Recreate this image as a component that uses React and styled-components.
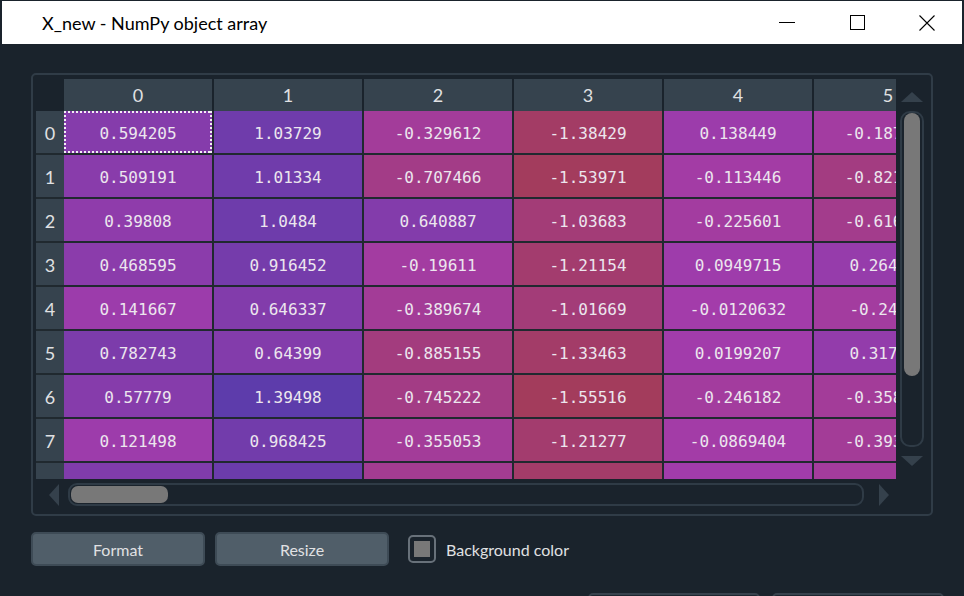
import React from 'react';
import styled, { createGlobalStyle } from 'styled-components';

const GlobalStyle = createGlobalStyle`
  html, body { margin: 0; padding: 0; background: #1a232c; }
  body { font-family: Lato, "Noto Sans", sans-serif; }
  * { box-sizing: border-box; }
`;

const BG = [26, 35, 44];
const GRID = '#20292f';
const HEADER = '#36434e';

const data = [
  ['0.594205', '1.03729', '-0.329612', '-1.38429', '0.138449', '-0.187421'],
  ['0.509191', '1.01334', '-0.707466', '-1.53971', '-0.113446', '-0.821937'],
  ['0.39808', '1.0484', '0.640887', '-1.03683', '-0.225601', '-0.616052'],
  ['0.468595', '0.916452', '-0.19611', '-1.21154', '0.0949715', '0.264318'],
  ['0.141667', '0.646337', '-0.389674', '-1.01669', '-0.0120632', '-0.24561'],
  ['0.782743', '0.64399', '-0.885155', '-1.33463', '0.0199207', '0.317426'],
  ['0.57779', '1.39498', '-0.745222', '-1.55516', '-0.246182', '-0.358214'],
  ['0.121498', '0.968425', '-0.355053', '-1.21277', '-0.0869404', '-0.393157'],
  ['0.702114', '1.10532', '-0.512207', '-1.30118', '0.0512734', '-0.301548'],
];

function cellColor(str) {
  const v = parseFloat(str);
  const vmax = 2.2;
  const vmin = -2.0;
  const hue = (0.66 + (0.33 * (vmax - v)) / (vmax - vmin)) * 360;
  const s = 0.7;
  const val = 1;
  const c = val * s;
  const x = c * (1 - Math.abs(((hue / 60) % 2) - 1));
  const m = val - c;
  let r = 0, g = 0, b = 0;
  if (hue < 60) [r, g, b] = [c, x, 0];
  else if (hue < 120) [r, g, b] = [x, c, 0];
  else if (hue < 180) [r, g, b] = [0, c, x];
  else if (hue < 240) [r, g, b] = [0, x, c];
  else if (hue < 300) [r, g, b] = [x, 0, c];
  else [r, g, b] = [c, 0, x];
  const a = 0.6;
  const mix = (ch, i) => Math.round(((ch + m) * 255) * a + BG[i] * (1 - a));
  return `rgb(${mix(r, 0)}, ${mix(g, 1)}, ${mix(b, 2)})`;
}

const Window = styled.div`
  width: 964px;
  height: 596px;
  overflow: hidden;
  background: #1a232c;
  display: flex;
  flex-direction: column;
`;

const TitleBar = styled.div`
  height: 43px;
  margin: 1px 2px 0 2px;
  background: #ffffff;
  display: flex;
  align-items: center;
  flex-shrink: 0;
`;

const Title = styled.div`
  flex: 1;
  padding-left: 40px;
  font-family: Lato, "Noto Sans", sans-serif;
  font-size: 18px;
  color: #000;
`;

const CaptionButton = styled.div`
  width: 70px;
  height: 100%;
  display: flex;
  align-items: center;
  justify-content: center;
`;

const Body = styled.div`
  padding: 29px 31px 0 31px;
  display: flex;
  flex-direction: column;
`;

const Frame = styled.div`
  width: 902px;
  height: 443px;
  border: 2px solid #303c47;
  border-radius: 5px;
  padding: 4px 3px 0 3px;
  display: grid;
  grid-template-columns: 860px 32px;
  grid-template-rows: 400px 35px;
`;

const Viewport = styled.div`
  width: 860px;
  height: 400px;
  overflow: hidden;
`;

const Row = styled.div`
  display: flex;
`;

const Corner = styled.div`
  width: 28px;
  height: 32px;
  flex-shrink: 0;
`;

const HeaderCell = styled.div`
  width: 150px;
  height: 32px;
  flex-shrink: 0;
  background: ${HEADER};
  border-right: 2px solid #1a232c;
  color: #e0e1e3;
  font-family: Lato, "Noto Sans", sans-serif;
  font-size: 18px;
  display: flex;
  align-items: center;
  justify-content: center;
`;

const RowHeader = styled.div`
  width: 28px;
  height: 44px;
  flex-shrink: 0;
  background: ${HEADER};
  border-bottom: 2px solid ${GRID};
  color: #e0e1e3;
  font-family: Lato, "Noto Sans", sans-serif;
  font-size: 18px;
  padding-top: 2px;
  display: flex;
  align-items: center;
  justify-content: center;
`;

const Cell = styled.div`
  position: relative;
  width: 150px;
  height: 44px;
  flex-shrink: 0;
  background: ${(p) => p.$bg};
  border-right: 2px solid ${GRID};
  border-bottom: 2px solid ${GRID};
  color: #ece6ee;
  font-family: "DejaVu Sans Mono", monospace;
  font-size: 16px;
  padding-top: 2px;
  display: flex;
  align-items: center;
  justify-content: center;
  white-space: nowrap;

  ${(p) =>
    p.$focused &&
    `
    &::after {
      content: '';
      position: absolute;
      left: 0; top: 0; right: 0; bottom: 0;
      background:
        repeating-linear-gradient(90deg, #f3eef4 0 2px, transparent 2px 4px) top left / 100% 2px no-repeat,
        repeating-linear-gradient(90deg, #f3eef4 0 2px, transparent 2px 4px) bottom left / 100% 2px no-repeat,
        repeating-linear-gradient(180deg, #f3eef4 0 2px, transparent 2px 4px) top left / 2px 100% no-repeat,
        repeating-linear-gradient(180deg, #f3eef4 0 2px, transparent 2px 4px) top right / 2px 100% no-repeat;
    }
  `}
`;

const VScroll = styled.div`
  display: flex;
  flex-direction: column;
`;

const ArrowArea = styled.div`
  height: ${(p) => p.$h || 32}px;
  width: ${(p) => p.$w || 32}px;
  padding-top: ${(p) => p.$pt || 0}px;
  padding-left: ${(p) => p.$pl || 0}px;
  flex-shrink: 0;
  display: flex;
  align-items: flex-start;
`;

const VTrack = styled.div`
  height: 336px;
  margin: 0 4px;
  border: 2px solid #2f3b46;
  border-radius: 10px;
  padding: 0 2px;
`;

const VHandle = styled.div`
  height: 263px;
  background: #787878;
  border-radius: 8px;
`;

const HScroll = styled.div`
  display: flex;
  padding-top: 4px;
`;

const HTrack = styled.div`
  width: 796px;
  height: 23px;
  border: 2px solid #2f3b46;
  border-radius: 9px;
  padding: 1px 1px;
`;

const HHandle = styled.div`
  width: 97px;
  height: 17px;
  background: #787878;
  border-radius: 7px;
`;

const Toolbar = styled.div`
  margin-top: 16px;
  height: 34px;
  display: flex;
  align-items: center;
  gap: 10px;
`;

const Button = styled.div`
  width: 174px;
  height: 34px;
  background: #505e69;
  border: 2px solid #3e4b56;
  border-radius: 5px;
  color: #e0e1e3;
  font-family: Lato, "Noto Sans", sans-serif;
  font-size: 16px;
  display: flex;
  align-items: center;
  justify-content: center;
`;

const CheckLabel = styled.label`
  margin-left: 9px;
  display: flex;
  align-items: center;
  gap: 10px;
  color: #e0e1e3;
  font-family: Lato, "Noto Sans", sans-serif;
  font-size: 16px;
`;

const CheckBox = styled.span`
  width: 28px;
  height: 28px;
  border: 2px solid #68717a;
  border-radius: 5px;
  padding: 4px;
  display: flex;
`;

const CheckFill = styled.span`
  flex: 1;
  background: #787878;
`;

const Footer = styled.div`
  margin-top: 27px;
  padding-right: 20px;
  display: flex;
  justify-content: flex-end;
  gap: 12px;
`;

const FooterButton = styled.div`
  width: 172px;
  height: 34px;
  border: 2px solid #37424d;
  border-radius: 5px;
  background: #1d2630;
`;

const Tri = ({ dir }) => {
  const fill = '#35414c';
  if (dir === 'up')
    return (
      <svg width="22" height="10" viewBox="0 0 22 10">
        <polygon points="0,10 11,0 22,10" fill={fill} />
      </svg>
    );
  if (dir === 'down')
    return (
      <svg width="22" height="10" viewBox="0 0 22 10">
        <polygon points="0,0 22,0 11,10" fill={fill} />
      </svg>
    );
  if (dir === 'left')
    return (
      <svg width="10" height="22" viewBox="0 0 10 22">
        <polygon points="10,0 10,22 0,11" fill={fill} />
      </svg>
    );
  return (
    <svg width="10" height="22" viewBox="0 0 10 22">
      <polygon points="0,0 10,11 0,22" fill={fill} />
    </svg>
  );
};

export default function App() {
  return (
    <>
      <GlobalStyle />
      <Window>
        <TitleBar>
          <Title>X_new - NumPy object array</Title>
          <CaptionButton>
            <svg width="16" height="15" viewBox="0 0 16 15">
              <line x1="0" y1="7.5" x2="16" y2="7.5" stroke="#000" strokeWidth="1" />
            </svg>
          </CaptionButton>
          <CaptionButton>
            <svg width="15" height="15" viewBox="0 0 15 15">
              <rect x="0.5" y="0.5" width="14" height="14" fill="none" stroke="#000" strokeWidth="1" />
            </svg>
          </CaptionButton>
          <CaptionButton>
            <svg width="16" height="16" viewBox="0 0 16 16">
              <path d="M0.5 0.5 L15.5 15.5 M15.5 0.5 L0.5 15.5" stroke="#000" strokeWidth="1.1" />
            </svg>
          </CaptionButton>
        </TitleBar>
        <Body>
          <Frame>
            <Viewport>
              <Row>
                <Corner />
                {[0, 1, 2, 3, 4, 5].map((c) => (
                  <HeaderCell key={c}>{c}</HeaderCell>
                ))}
              </Row>
              {data.map((row, r) => (
                <Row key={r}>
                  <RowHeader>{r}</RowHeader>
                  {row.map((v, c) => (
                    <Cell key={c} $bg={cellColor(v)} $focused={r === 0 && c === 0}>
                      {v}
                    </Cell>
                  ))}
                </Row>
              ))}
            </Viewport>
            <VScroll>
              <ArrowArea $pt={13} $pl={5}>
                <Tri dir="up" />
              </ArrowArea>
              <VTrack>
                <VHandle />
              </VTrack>
              <ArrowArea $pt={9} $pl={5}>
                <Tri dir="down" />
              </ArrowArea>
            </VScroll>
            <HScroll>
              <ArrowArea $h={23} $pt={1} $pl={13}>
                <Tri dir="left" />
              </ArrowArea>
              <HTrack>
                <HHandle />
              </HTrack>
              <ArrowArea $h={23} $pt={1} $pl={15}>
                <Tri dir="right" />
              </ArrowArea>
            </HScroll>
            <div />
          </Frame>
          <Toolbar>
            <Button>Format</Button>
            <Button>Resize</Button>
            <CheckLabel>
              <CheckBox>
                <CheckFill />
              </CheckBox>
              Background color
            </CheckLabel>
          </Toolbar>
        </Body>
        <Footer>
          <FooterButton />
          <FooterButton />
        </Footer>
      </Window>
    </>
  );
}
